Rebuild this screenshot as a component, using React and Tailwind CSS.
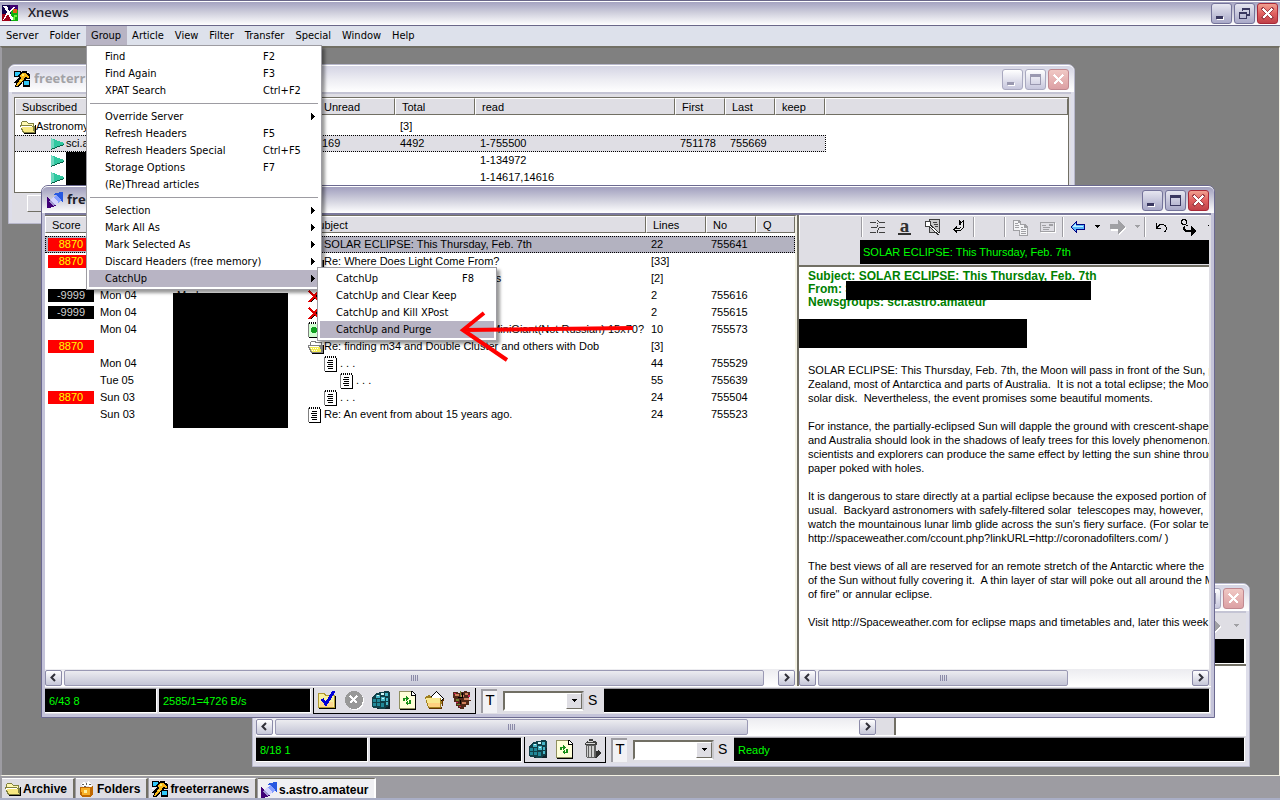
import React from 'react';
import clsx from 'clsx';

/* ---------- icons ---------- */

function Icon({ w = 16, h = 16, className, children }) {
  return (
    <svg width={w} height={h} viewBox={`0 0 ${w} ${h}`} shapeRendering="crispEdges" aria-hidden="true" className={clsx('shrink-0', className)}>
      {children}
    </svg>
  );
}

const LogoIcon = () => (
  <Icon>
    <rect width="16" height="16" fill="#10004a" />
    <rect x="8" width="8" height="8" fill="#400070" />
    <rect x="0" y="9" width="8" height="7" fill="#a00018" />
    <rect x="9" y="5" width="7" height="11" fill="#10b010" />
    <rect x="11" y="4" width="4" height="4" fill="#e06010" />
    <path d="M1 1h4l2 5 4-4h2l-5 6 4 7h-3l-3-6-4 6H1l4-8z" fill="#fff" />
    <path d="M12 10h3v2h-2v3h-2z" fill="#70f040" />
  </Icon>
);

const ServerIcon = () => (
  <Icon>
    <path d="M0 0h7v6H0zM9 9h7v7H9z" fill="#000" />
    <path d="M1 1h5v4H1zM10 10h5v4h-5z" fill="#30c8f8" />
    <path d="M8 0h4l4 3v5l-4 0v2H9l-1 2-3 4H1l1-4-2 0 5-6-2-2 3-1z" fill="#000" />
    <path d="M8 2h3l4 3v2l-4-1-1 3-3 2-3 4H2l3-5 2-3-1-2z" fill="#f8b818" />
    <path d="M8 3h2v2H8zM6 9h2v1H6z" fill="#f8f070" />
    <path d="M10 10h5v3h-5zM1 2h3v2H1z" fill="#30c8f8" />
    <path d="M0 7h2v1H0zM13 1h2v1h-2z" fill="#fff" />
  </Icon>
);

const LinkIcon = () => (
  <Icon>
    <path d="M5 2h3V1h4V0h4v10h-1V9h-1V8L8 3z" fill="#2858e0" />
    <path d="M9 3l5 5-3 3-5-5z" fill="#88a0ff" />
    <path d="M6 5l5 5-3 3-5-5z" fill="#d4d4ff" />
    <path d="M0 5h1v1h1v1h1v1l5 5h1v1H7v1H4v1H0z" fill="#400078" />
    <path d="M3 8l5 5-2 1-4-5z" fill="#a098d0" />
  </Icon>
);

const FolderIcon = () => (
  <Icon>
    <path d="M1 3h1V2h5v1h1v1h6v3h1v7H3v-1H2V8H1z" fill="#808040" />
    <path d="M2 3h5v1h1v1h5v2H3v1H2z" fill="#fff8b0" />
    <path d="M1 7h11v1h1v4h1v1H4v-1H3v-2H2V8H1z" fill="#f8e880" />
    <path d="M0 6h12v1H1v1H0zM1 8h1v3H1zM2 11h1v2H2z" fill="#808040" />
    <path d="M1 7h11v1H2v1H1z" fill="#fff" />
    <path d="M15 6h1v9H4v-1h11z" fill="#000" />
  </Icon>
);

const ThreadFolderIcon = () => (
  <Icon>
    <path d="M3 2h5v1h6v3h1v8H3v-1H2v-2H1V9H0V6h2V3h1z" fill="#808080" />
    <path d="M3 3h4v1h6v2H3z" fill="#fff" />
    <path d="M1 7h10v1h1v2h1v3H4v-1H3v-2H2V8H1z" fill="#f4ec50" />
    <path d="M1 7h10v1H1zM3 9h1v1H3zM5 9h1v1H5zM7 9h1v1H7zM9 9h1v1H9zM4 11h1v1H4zM6 11h1v1H6zM8 11h1v1H8z" fill="#fff" />
    <path d="M15 6h1v9H4v-1h11z" fill="#000" />
  </Icon>
);

const NoteIcon = ({ green }) => (
  <Icon>
    <rect x="1" y="2" width="12" height="14" fill="#000" />
    <rect x="0" y="1" width="12" height="14" fill="#808080" />
    <rect x="1" y="2" width="11" height="13" fill={green ? '#d0ffd0' : '#fff'} />
    <path d="M1 0h1v2H1zM3 0h1v2H3zM5 0h1v2H5zM7 0h1v2H7zM9 0h1v2H9zM11 0h1v2h-1z" fill="#000" />
    <path d="M2 1h1v1H2zM4 1h1v1H4zM6 1h1v1H6zM8 1h1v1H8zM10 1h1v1h-1z" fill="#fff" />
    {green ? (
      <path d="M4 5h4v1h1v4H8v1H4v-1H3V6h1z" fill="#10a020" />
    ) : (
      <path d="M4 4h5v1H4zM3 6h6v1H3zM4 8h5v1H4zM3 10h6v1H3zM4 12h5v1H4z" fill="#000" />
    )}
  </Icon>
);

const CrossIcon = () => (
  <Icon>
    <path d="M3 4l10 10M13 3L3 14" stroke="#000" strokeWidth="1" />
    <path d="M1 3l11 11M11 3L1 14" stroke="#e00000" strokeWidth="2" />
  </Icon>
);

const GroupIcon = () => (
  <Icon>
    <path d="M1 2l13 5v2L1 14z" fill="#30c8a0" />
    <path d="M1 2l3 2v8l-3 2z" fill="#70d8c0" />
    <path d="M1 13l13-5v1L1 14z" fill="#086048" />
  </Icon>
);

const CheckFolderIcon = () => (
  <Icon w={20} h={20}>
    <path d="M2 4h6l1 2h10v13H2z" fill="#000" />
    <path d="M1 3h7l1 2h9v13H1z" fill="#b09830" />
    <path d="M2 4h5l1 2h9v11H2z" fill="#f8f0a0" />
    <path d="M3 12h13v5H3z" fill="#ffd890" />
    <path d="M5 9l4 5 8-13" stroke="#0000d8" strokeWidth="3" fill="none" />
  </Icon>
);

const StopIcon = () => (
  <Icon w={20} h={20}>
    <circle cx="11" cy="11" r="9" fill="#fff" />
    <circle cx="10" cy="10" r="9" fill="#989898" />
    <path d="M6 6l7 7M13 6l-7 7" stroke="#fff" strokeWidth="2" />
  </Icon>
);

const CubeIcon = () => (
  <Icon w={20} h={20}>
    <path d="M4 16h15v3H6zM17 2h2v15h-2z" fill="#102028" />
    <path d="M1 8l3-4 5-2 8-1 2 2-1 13-5 3-11-1-1-3z" fill="#104048" />
    <path d="M2 9h3v3H2zM6 9h3v3H6zM2 13h3v3H2zM6 13h3v3H6zM10 13h3v4h-3z" fill="#208898" />
    <path d="M5 5h4v3H5zM10 7h4v4h-4zM14 3h3v3h-3zM15 8h2v3h-2zM15 12h2v3h-2z" fill="#48b8c8" />
    <path d="M6 5h2v1H6zM10 3h3v2h-3zM11 8h2v1h-2z" fill="#d0f8f8" />
  </Icon>
);

const RefreshDocIcon = () => (
  <Icon w={20} h={20}>
    <path d="M2 1h12l4 4v15H2z" fill="#000" />
    <path d="M1 1h12v5h4v13H1z" fill="#909060" />
    <path d="M2 2h11v4h4v12H2z" fill="#ffffd8" />
    <path d="M14 2l3 3h-3z" fill="#fff" />
    <path d="M5 11V8h3V6l3 3-3 2V9H7v2zM13 10v4h-3v2l-3-3 3-2v2h1v-3z" fill="#189018" />
  </Icon>
);

const OpenBoxIcon = () => (
  <Icon w={20} h={20}>
    <path d="M2 17h15v2H5zM16 9h3l-2 10z" fill="#603000" />
    <path d="M5 8l6-7 8 8-4 3H6z" fill="#000" />
    <path d="M6 8l5-6 7 7-3 2H7z" fill="#fff" />
    <path d="M0 7l4-2 3 3h9v3h1l-1 7H3z" fill="#a08020" />
    <path d="M1 8h13l1 1-1 8H4z" fill="#f8e890" />
    <path d="M3 13h12v4H4z" fill="#ffd080" />
  </Icon>
);

const BrainIcon = () => (
  <Icon w={20} h={20}>
    <path d="M1 2h5v1h3V2h3V1h3v1h3v4h-1v4h2v1h-2v4h-3v2h-2v2H8v-1H6v-2H4v-4H2V8H1z" fill="#502818" />
    <path d="M3 4h4v2H3zM9 5h3v2H9zM13 3h3v2h-3zM12 8h5v2h-5zM10 12h4v2h-4z" fill="#d0805c" />
    <path d="M4 9h3v2H4zM8 1h1v7H8zM5 14h3v1H5z" fill="#708030" />
    <path d="M2 3h2v1H2zM16 5h2v2h-2zM4 12h2v1H4zM7 16h2v1H7z" fill="#d02050" />
    <path d="M10 3h1v5h-1zM6 7h5v1H6zM8 10h1v4H8z" fill="#000" />
  </Icon>
);

const TrashIcon = () => (
  <Icon w={20} h={20}>
    <path d="M12 12h4v-1l3 3-3 3-2 2H9z" fill="#303030" />
    <path d="M7 0h4v2h2l2 2v2H3V4l2-2h2z" fill="#404040" />
    <path d="M4 4h9v1H4zM6 2h5v1H6z" fill="#d8d8d8" />
    <path d="M4 6h10v12l-2 1H6l-2-1z" fill="#606060" />
    <path d="M5 7h1v11H5zM7 7h2v11H7zM10 7h2v11h-2z" fill="#d0d0d0" />
  </Icon>
);

const MailboxIcon = () => (
  <Icon>
    <path d="M1 6h10l3-1v8l-3 3H3l-2-2z" fill="#c06800" />
    <path d="M2 7h9v7H3z" fill="#f8b028" />
    <path d="M2 4l2-3 3 1 2-2 3 2 1 3-2 1-3-1-4 1z" fill="#fff" />
    <path d="M3 3h2v1H3zM7 2h1v2H7zM10 3h2v1h-2zM5 5h2v1H5z" fill="#606060" />
    <path d="M5 9h3v3H5z" fill="#fff0a0" />
  </Icon>
);

const SplitIcon = () => (
  <Icon>
    <path d="M0 3h6v1H0zM9 3h6v1H9zM1 8h6v1H1zM9 8h6v1H9zM0 13h6v1H0zM9 13h6v1H9zM7 1h1v1H7zM8 2h1v1H8zM7 4h1v1H7zM7 6h1v2H7zM8 9h1v2H8zM7 11h1v3H7z" fill="#404040" />
  </Icon>
);

const FindIcon = () => (
  <Icon>
    <path d="M5 0h11v14H5z" fill="#404040" />
    <path d="M6 1h9v12H6z" fill="#c8c8c8" />
    <path d="M9 3h4v1H9zM10 5h4v1h-4zM11 7h3v1h-3zM8 10h2v1H8z" fill="#404040" />
    <circle cx="4" cy="5" r="3" fill="#fff" stroke="#404040" />
    <path d="M6 7l9 8" stroke="#303030" strokeWidth="3" />
    <path d="M6 7l9 8" stroke="#fff" />
  </Icon>
);

const WrapIcon = () => (
  <Icon>
    <path d="M8 1l2 2 3-2v8l-4 3H6v3l-4-5 4-4v3h2l2-2V6H8z" fill="#000" />
    <path d="M10 4l2-1v5l-3 3H4v-1h4l2-2z" fill="#e8e8e8" />
  </Icon>
);

const CopyIcon = () => (
  <Icon w={17} h={17}>
    <path d="M1 1h6l2 2v9H1zM7 5h6l3 3v9H7z" fill="#a0a0a4" />
    <path d="M2 2h4v2h2v7H2zM8 6h4v3h3v7H8z" fill="#f4f4f6" />
    <path d="M3 4h3v1H3zM3 6h4v1H3zM3 8h4v1H3zM9 8h2v1H9zM9 10h5v1H9zM9 12h5v1H9zM9 14h5v1H9z" fill="#a0a0a4" />
  </Icon>
);

const CardIcon = () => (
  <Icon>
    <path d="M1 4h15v10H1z" fill="#fff" />
    <path d="M0 3h15v10H0z" fill="#a0a0a4" />
    <path d="M1 4h13v8H1z" fill="#dfdee4" />
    <path d="M9 5h4v2H9zM2 6h4v1H2zM3 8h7v1H3zM3 10h6v1H3z" fill="#a0a0a4" />
  </Icon>
);

const BackIcon = () => (
  <Icon>
    <path d="M7 1v4h8v6H7v4L0 8z" fill="#000080" />
    <path d="M6 3v3h8v4H6v3L1 8z" fill="#58b8f8" />
    <path d="M6 4v3h7v1H2z" fill="#c0f0ff" />
  </Icon>
);

const ForwardIcon = () => (
  <Icon>
    <path d="M9 2v4H1v6h8v4l7-7z" fill="#fff" />
    <path d="M8 1v4H0v5h8v5l7-7z" fill="#a0a0a4" />
  </Icon>
);

const UndoIcon = () => (
  <Icon>
    <path d="M3 4h1v3h1V6h1V5h5v1h2v2h1v3h-1v2h-2v-1h1v-1h1V8h-1V7h-1V6H7v1H6v1H5v1h3v1H3z" fill="#000" />
  </Icon>
);

const NextUnreadIcon = () => (
  <Icon w={18} h={18}>
    <path d="M3 1h4v1h1v4H7v1H3V6H2V2h1zM7 7h2v1H7z" fill="#000" />
    <path d="M4 2h2v1h1v3H4V5H3V3h1z" fill="#dfdee4" />
    <path d="M5 8h1v3h1v1h5V8l6 5-6 5v-4H6v-1H5v-1H4V9h1z" fill="#000" />
  </Icon>
);

const Caret = ({ color = '#000' }) => (
  <Icon w={7} h={4}>
    <path d="M1 0h5v1H5v1H4v1H3V2H2V1H1z" fill={color} />
  </Icon>
);

/* ---------- window chrome ---------- */

function CaptionButton({ kind, active }) {
  const ink = active ? '#3a3860' : '#9a99b0';
  return (
    <button
      aria-label={kind}
      className={clsx(
        'flex h-[21px] w-[21px] items-center justify-center rounded-[3px] border',
        kind === 'Close' && active && 'border-[#a82838] bg-linear-to-b from-[#f0a090] via-[#e06060] to-[#c04048]',
        kind === 'Close' && !active && 'border-[#c08890] bg-linear-to-b from-[#f0c8c4] to-[#dca0a4]',
        kind !== 'Close' && active && 'border-[#74739a] bg-linear-to-b from-[#e6e6f0] to-[#a9a9c8]',
        kind !== 'Close' && !active && 'border-[#a9a9c0] bg-linear-to-b from-white to-[#c6c6dc]'
      )}
    >
      <Icon w={17} h={17}>
        {kind === 'Minimize' && (
          <>
            <rect x="4" y="12" width="7" height="3" fill="#fff" />
            <rect x="3" y="11" width="7" height="3" fill={ink} />
          </>
        )}
        {kind === 'Maximize' && <path d="M3 3h11v11H3zM4 6h9v7H4z" fillRule="evenodd" fill={ink} />}
        {kind === 'Restore' && <path d="M6 3h8v8h-3V9h2V5H7v1H6zM3 7h8v7H3zM4 9h6v4H4z" fillRule="evenodd" fill={ink} />}
        {kind === 'Close' && (
          <>
            {active && <path d="M3 3l11 11M14 3L3 14" stroke="#a04048" strokeWidth="4" />}
            <path d="M4 4l9 9M13 4l-9 9" stroke="#fff" strokeWidth="2" />
          </>
        )}
      </Icon>
    </button>
  );
}

function MdiWindow({ title, icon, active = false, className, children }) {
  return (
    <section
      className={clsx(
        'absolute flex flex-col rounded-t-[7px] border',
        active ? 'border-[#6b6990] bg-[#c4c3d9]' : 'border-[#b8b8cc] bg-[#dedeea]',
        className
      )}
    >
      <header
        className={clsx(
          'flex h-[27px] shrink-0 items-center gap-1 rounded-t-[6px] border-t border-white bg-linear-to-b pr-[5px] pl-[5px] font-[Open_Sans,sans-serif] text-[13px] font-bold',
          active ? 'from-[#a19fbe] via-[#d0d0dd] to-white text-[#1e1e2a]' : 'from-[#d4d4e4] via-[#ececf2] to-white text-[#a2a2a6]'
        )}
      >
        {icon}
        <h2 className="flex-1 truncate">{title}</h2>
        <div className="flex gap-0.5">
          <CaptionButton kind="Minimize" active={active} />
          <CaptionButton kind="Maximize" active={active} />
          <CaptionButton kind="Close" active={active} />
        </div>
      </header>
      <div className={clsx('mx-[3px] mb-[3px] flex min-h-0 flex-1 flex-col border-t-2 bg-[#dfdee4]', active ? 'border-[#7b799c]' : 'border-[#c4c4d4]')}>
        {children}
      </div>
    </section>
  );
}

/* ---------- list views ---------- */

function ColumnHeads({ heads }) {
  return (
    <thead>
      <tr>
        {heads.map((head, i) => (
          <th key={i} scope="col" className="p-0 pb-[3px] text-left font-normal">
            <div className="h-[17px] overflow-hidden border-t border-r border-b border-l border-t-white border-r-[#716f64] border-b-[#716f64] border-l-white bg-[#dfdee4] pl-[6px] leading-[16px]">
              {head}
            </div>
          </th>
        ))}
      </tr>
    </thead>
  );
}

const groups = [
  { name: 'Astronomy', folder: true, total: '[3]' },
  { name: 'sci.astro.amateur', unread: '169', total: '4492', read: '1-755500', first: '751178', last: '755669', selected: true },
  { name: '', read: '1-134972' },
  { name: '', read: '1-14617,14616' },
];

function GroupList() {
  return (
    <table className="w-full table-fixed border-collapse">
      <colgroup>
        <col className="w-[302px]" />
        <col className="w-[78px]" />
        <col className="w-[80px]" />
        <col className="w-[200px]" />
        <col className="w-[50px]" />
        <col className="w-[50px]" />
        <col className="w-[50px]" />
        <col />
      </colgroup>
      <ColumnHeads heads={['Subscribed', 'Unread', 'Total', 'read', 'First', 'Last', 'keep', '']} />
      <tbody>
        {groups.map((g, i) => {
          const cell = clsx('h-[17px] p-0 pl-[5px] leading-[17px]', g.selected && 'bg-[linear-gradient(90deg,#000_1px,transparent_1px),linear-gradient(90deg,#000_1px,transparent_1px),linear-gradient(#dfdee4,#dfdee4)] bg-[length:2px_1px,2px_1px,100%_100%] bg-[position:0_0,0_100%,0_0] [background-repeat:repeat-x,repeat-x,no-repeat]');
          return (
            <tr key={i}>
              <td className={cell}>
                <div className={clsx('flex h-[17px] items-center', !g.folder && 'pl-[30px]')}>
                  {g.folder ? <FolderIcon /> : <GroupIcon />}
                  <span>{g.name}</span>
                  {!g.name && <span className="h-[17px] w-[60px] bg-black" />}
                </div>
              </td>
              <td className={cell}>{g.unread}</td>
              <td className={cell}>{g.total}</td>
              <td className={cell}>{g.read}</td>
              <td className={cell}>{g.first}</td>
              <td className={cell}>{g.last}</td>
              <td className={cell}></td>
              <td className={clsx('p-0', g.selected && 'border-l border-dotted border-black')}></td>
            </tr>
          );
        })}
      </tbody>
    </table>
  );
}

const articles = [
  { score: 8870, icon: 'note', subject: 'SOLAR ECLIPSE: This Thursday, Feb. 7th', lines: '22', no: '755641', selected: true },
  { score: 8870, icon: 'folder', subject: 'Re: Where Does Light Come From?', lines: '[33]' },
  { icon: 'folder', subject: 'Re: Old telescopes and the manuals', lines: '[2]' },
  { score: -9999, date: 'Mon 04', author: 'Mark', icon: 'cross', lines: '2', no: '755616' },
  { score: -9999, date: 'Mon 04', icon: 'cross', lines: '2', no: '755615' },
  { date: 'Mon 04', icon: 'green', subject: "Re: Has anyone used Oberwerk's MiniGiant(Not Russian) 15x70?", lines: '10', no: '755573' },
  { score: 8870, icon: 'folder', subject: 'Re: finding m34 and Double Cluster and others with Dob', lines: '[3]' },
  { date: 'Mon 04', icon: 'note', depth: 1, subject: '. . .', lines: '44', no: '755529' },
  { date: 'Tue 05', icon: 'note', depth: 2, subject: '. . .', lines: '55', no: '755639' },
  { score: 8870, date: 'Sun 03', icon: 'note', depth: 1, subject: '. . .', lines: '24', no: '755504' },
  { date: 'Sun 03', icon: 'note', subject: 'Re: An event from about 15 years ago.', lines: '24', no: '755523' },
];

const subjectIcons = {
  note: <NoteIcon />,
  green: <NoteIcon green />,
  cross: <CrossIcon />,
  folder: <ThreadFolderIcon />,
};

const indents = ['', 'pl-4', 'pl-8'];

function ArticleList() {
  return (
    <table className="w-full table-fixed border-collapse">
      <colgroup>
        <col className="w-[51px]" />
        <col className="w-[77px]" />
        <col className="w-[131px]" />
        <col className="w-[342px]" />
        <col className="w-[60px]" />
        <col className="w-[50px]" />
        <col />
      </colgroup>
      <ColumnHeads heads={['Score', 'Date', 'From', 'Subject', 'Lines', 'No', 'Q']} />
      <tbody>
        {articles.map((a, i) => (
          <tr key={i} className={clsx(a.selected && 'bg-[#b3b2c0] outline-1 -outline-offset-1 outline-dotted outline-black')}>
            <td className="h-[17px] p-0 pl-[3px]">
              {a.score && (
                <div className={clsx('h-[13px] w-[46px] text-center leading-[13px]', a.score > 0 ? 'bg-[#ff0000] text-[#ffff00]' : 'bg-black text-[#d0d0d0]')}>
                  {a.score}
                </div>
              )}
            </td>
            <td className="p-0 pl-1 leading-[17px]">{a.date}</td>
            <td className="p-0 pl-1 leading-[17px]">{a.author}</td>
            <td className="p-0 pl-1 leading-[17px]">
              <div className={clsx('flex h-[17px] items-center overflow-hidden whitespace-nowrap', indents[a.depth || 0])}>
                {subjectIcons[a.icon]}
                <span>{a.subject}</span>
              </div>
            </td>
            <td className="p-0 pl-[5px] leading-[17px]">{a.lines}</td>
            <td className="p-0 pl-[5px] leading-[17px]">{a.no}</td>
            <td className="p-0"></td>
          </tr>
        ))}
      </tbody>
    </table>
  );
}

/* ---------- shared bars ---------- */

function ScrollButton({ dir }) {
  return (
    <button aria-label={`Scroll ${dir}`} className="flex h-[16px] w-[17px] items-center justify-center rounded-[2px] border border-[#8b8aa8] bg-linear-to-b from-white to-[#c6c7d8]">
      <svg width="9" height="9" viewBox="0 0 9 9" aria-hidden="true">
        <path d={dir === 'left' ? 'M6 1L2.500 4.500 6 8' : 'M3 1l3.500 3.500L3 8'} fill="none" stroke="#303038" strokeWidth="2" />
      </svg>
    </button>
  );
}

function ScrollBar({ thumb }) {
  return (
    <div className="flex h-[17px] shrink-0 items-center gap-0.5 bg-linear-to-b from-[#ececf0] to-white">
      <ScrollButton dir="left" />
      <div className={clsx('flex h-[16px] items-center justify-center gap-px rounded-[2px] border border-[#9a99b4] bg-linear-to-b from-[#ececf0] to-[#c4c5d6]', thumb)}>
        {[0, 1, 2, 3].map((n) => (
          <span key={n} className="h-[6px] w-px bg-[#8b8aa8]" />
        ))}
      </div>
      <div className="flex-1" />
      <ScrollButton dir="right" />
    </div>
  );
}

function StatusPanel({ className, children }) {
  return (
    <div className={clsx('h-[25px] truncate border-t border-r border-b border-t-[#9d9ca2] border-r-white border-b-white bg-black pl-1 leading-[24px] text-[#00ff00]', className)}>
      {children}
    </div>
  );
}

function StatusBar({ id, left, middle, right, tools }) {
  return (
    <footer className="flex h-[28px] shrink-0 items-center border-t border-white pr-px">
      <StatusPanel className="w-[112px]">{left}</StatusPanel>
      <StatusPanel className="ml-0.5 w-[152px]">{middle}</StatusPanel>
      <div className="ml-[2px] flex h-[26px] items-center gap-[7px] border-r border-b border-l border-black px-[3px]">
        {tools.map(([label, icon]) => (
          <button key={label} aria-label={label}>
            {icon}
          </button>
        ))}
      </div>
      <button className="ml-[5px] flex h-[24px] w-[16px] items-start justify-center border-t-2 border-l-2 border-[#9d9ca2] bg-[#f2f2f5] text-[15px] leading-[18px]">T</button>
      <div className="ml-[6px] flex h-[20px] w-[81px] border-2 border-t-[#716f64] border-r-[#c8c8cc] border-b-white border-l-[#716f64] bg-white">
        <select id={id} className="min-w-0 flex-1 appearance-none bg-white" />
        <span className="flex w-[16px] items-center justify-center border border-t-white border-r-[#716f64] border-b-[#716f64] border-l-white bg-[#dfdee4]">
          <Caret />
        </span>
      </div>
      <label htmlFor={id} className="ml-1 w-[12px] text-[14px]">S</label>
      <StatusPanel className="ml-1 flex-1">{right}</StatusPanel>
    </footer>
  );
}

const Separator = () => <span className="mx-px h-[20px] w-[2px] shrink-0 border-r border-l border-r-white border-l-[#9d9ca2]" />;

function ToolButton({ label, className = 'w-[27px]', children }) {
  return (
    <button aria-label={label} className={clsx('flex h-[22px] shrink-0 items-center justify-center', className)}>
      {children}
    </button>
  );
}

function ArticleToolbar() {
  return (
    <div className="flex h-[25px] shrink-0 items-center overflow-hidden border-t border-l border-white pb-[2px] pl-[60px]">
      <Separator />
      <ToolButton label="Split"><SplitIcon /></ToolButton>
      <ToolButton label="Font">
        <span className="border-b-2 border-[#303030] px-0.5 font-[Liberation_Serif,serif] text-[19px] leading-[14px] font-bold text-[#303030]">a</span>
      </ToolButton>
      <ToolButton label="Search"><FindIcon /></ToolButton>
      <ToolButton label="Wrap"><WrapIcon /></ToolButton>
      <Separator />
      <span className="w-[27px] shrink-0" />
      <Separator />
      <ToolButton label="Copy"><CopyIcon /></ToolButton>
      <ToolButton label="Headers"><CardIcon /></ToolButton>
      <Separator />
      <ToolButton label="Back" className="w-[25px]"><BackIcon /></ToolButton>
      <ToolButton label="Back history" className="w-[14px]"><Caret /></ToolButton>
      <ToolButton label="Forward"><ForwardIcon /></ToolButton>
      <ToolButton label="Forward history" className="w-[12px]"><Caret color="#a0a0a4" /></ToolButton>
      <Separator />
      <ToolButton label="Undo"><UndoIcon /></ToolButton>
      <ToolButton label="Next unread"><NextUnreadIcon /></ToolButton>
      <ToolButton label="More" className="w-[18px]"><Caret /></ToolButton>
    </div>
  );
}

/* ---------- article ---------- */

const body = `SOLAR ECLIPSE: This Thursday, Feb. 7th, the Moon will pass in front of the Sun, producing
Zealand, most of Antarctica and parts of Australia.  It is not a total eclipse; the Moon will
solar disk.  Nevertheless, the event promises some beautiful moments.

For instance, the partially-eclipsed Sun will dapple the ground with crescent-shaped
and Australia should look in the shadows of leafy trees for this lovely phenomenon.
scientists and explorers can produce the same effect by letting the sun shine through
paper poked with holes.

It is dangerous to stare directly at a partial eclipse because the exposed portion of the
usual.  Backyard astronomers with safely-filtered solar  telescopes may, however,
watch the mountainous lunar limb glide across the sun's fiery surface. (For solar telescopes
http://spaceweather.com/ccount.php?linkURL=http://coronadofilters.com/ )

The best views of all are reserved for an remote stretch of the Antarctic where the
of the Sun without fully covering it.  A thin layer of star will poke out all around the Moon
of fire" or annular eclipse.

Visit http://Spaceweather.com for eclipse maps and timetables and, later this week`;

function ArticlePane() {
  return (
    <div className="flex min-w-0 flex-1 flex-col border-l-2 border-[#716f64]">
      <ArticleToolbar />
      <div className="ml-[61px] h-[24px] shrink-0 truncate bg-black pl-[3px] leading-[24px] text-[#00ff00]">SOLAR ECLIPSE: This Thursday, Feb. 7th</div>
      <article className="relative mt-px min-h-0 flex-1 overflow-hidden border-t-2 border-[#716f64] bg-white pt-[3px] pl-[9px]">
        <h3 className="text-[12px] leading-[13px] font-bold whitespace-nowrap text-[#008000]">
          Subject: SOLAR ECLIPSE: This Thursday, Feb. 7th
          <br />
          From: S
          <br />
          Newsgroups: sci.astro.amateur
        </h3>
        <span className="absolute top-[14px] left-[47px] h-[19px] w-[245px] bg-black" />
        <span className="absolute top-[52px] left-0 h-[29px] w-[228px] bg-black" />
        <p className="pt-[54px] leading-[14px] whitespace-pre">{body}</p>
      </article>
      <ScrollBar thumb="w-[250px]" />
    </div>
  );
}

/* ---------- menus ---------- */

const groupMenu = [
  { label: 'Find', key: 'F2' },
  { label: 'Find Again', key: 'F3' },
  { label: 'XPAT Search', key: 'Ctrl+F2' },
  null,
  { label: 'Override Server', sub: true },
  { label: 'Refresh Headers', key: 'F5' },
  { label: 'Refresh Headers Special', key: 'Ctrl+F5' },
  { label: 'Storage Options', key: 'F7' },
  { label: '(Re)Thread articles' },
  null,
  { label: 'Selection', sub: true },
  { label: 'Mark All As', sub: true },
  { label: 'Mark Selected As', sub: true },
  { label: 'Discard Headers (free memory)', sub: true },
  {
    label: 'CatchUp',
    active: true,
    sub: [
      { label: 'CatchUp', key: 'F8' },
      { label: 'CatchUp and Clear Keep' },
      { label: 'CatchUp and Kill XPost' },
      { label: 'CatchUp and Purge', active: true },
    ],
  },
];

function Menu({ items, className, keyWidth }) {
  return (
    <ul role="menu" className={clsx('absolute z-20 border border-[#9d9ca2] bg-white p-[2px] shadow-[3px_3px_3px_rgba(0,0,0,0.4)]', className)}>
      {items.map((item, i) =>
        item ? (
          <li key={i} className="relative">
            <button role="menuitem" className={clsx('flex h-[17px] w-full items-center pl-4 text-left leading-[17px] whitespace-nowrap', item.active && 'bg-[#b8b4c4]')}>
              <span className="flex-1">{item.label}</span>
              {item.key && <span className={keyWidth}>{item.key}</span>}
              {item.sub && (
                <Icon w={5} h={7} className="mr-[3px]">
                  <path d="M0 0h1v1h1v1h1v1h1v1H3v1H2v1H1v1H0z" fill="#000" />
                </Icon>
              )}
            </button>
            {Array.isArray(item.sub) && <Menu items={item.sub} className="-top-[3px] left-[228px] w-[180px]" keyWidth="w-[32px]" />}
          </li>
        ) : (
          <li key={i} role="separator" className="mx-px my-1 h-px bg-[#9d9ca2]" />
        )
      )}
    </ul>
  );
}

const menuNames = ['Server', 'Folder', 'Group', 'Article', 'View', 'Filter', 'Transfer', 'Special', 'Window', 'Help'];

const tasks = [
  { label: 'Archive', icon: <FolderIcon /> },
  { label: 'Folders', icon: <MailboxIcon /> },
  { label: 'freeterranews', icon: <ServerIcon /> },
  { label: 's.astro.amateur', icon: <LinkIcon />, pressed: true },
];

export default function App() {
  return (
    <div className="relative flex h-screen flex-col overflow-hidden bg-[#dfdee4] font-[Liberation_Sans,Arial,sans-serif] text-[11px] text-black">
      <header className="flex h-[26px] shrink-0 items-center border-t border-b border-t-[#6a6789] border-b-[#6a6789] bg-linear-to-b from-[#a19fbe] via-[#d0d0dd] to-white pr-[2px] pl-[2px] shadow-[inset_0_1px_0_#fff]">
        <LogoIcon />
        <h1 className="ml-[10px] flex-1 font-[Open_Sans,sans-serif] text-[13px] font-semibold text-[#1e1e2a]">Xnews</h1>
        <div className="flex gap-0.5">
          <CaptionButton kind="Minimize" active />
          <CaptionButton kind="Restore" active />
          <CaptionButton kind="Close" active />
        </div>
      </header>

      <nav className="flex h-[20px] shrink-0 bg-[#dde1eb] pl-px font-[DejaVu_Sans_Condensed,Tahoma,sans-serif] text-[11px]">
        {menuNames.map((name) => (
          <div key={name} className="relative">
            <button className={clsx('h-[19px] pt-px pr-[6px] pl-[5px]', name === 'Group' && 'bg-[#b8b4c4]')}>{name}</button>
            {name === 'Group' && <Menu items={groupMenu} className="top-[19px] left-0 w-[236px]" keyWidth="w-[56px]" />}
          </div>
        ))}
      </nav>

      <main className="relative min-h-0 flex-1 overflow-hidden border-t-2 border-r border-b border-l-2 border-t-[#716f64] border-r-[#f4f2e4] border-b-[#f4f2e4] border-l-[#9d9ca2] bg-[#808080]">
        <MdiWindow title="freeterranews" icon={<ServerIcon />} className="top-[16px] right-[204px] left-[6px] h-[160px]">
          <div className="mx-[2px] mt-[3px] h-[96px] shrink-0 overflow-hidden border border-[#716f64] bg-white">
            <GroupList />
          </div>
          <button className="mt-[2px] ml-[15px] h-[17px] w-[75px] border border-t-white border-r-[#716f64] border-b-[#716f64] border-l-white">Close</button>
        </MdiWindow>

        <MdiWindow title="alt.astronomy" icon={<LinkIcon />} className="right-[29px] bottom-[8px] left-[250px] h-[184px]">
          <div className="flex min-h-0 flex-1">
            <div className="flex w-[620px] flex-col bg-white">
              <div className="flex-1" />
              <ScrollBar thumb="w-[473px]" />
            </div>
            <div className="ml-[18px] flex min-w-0 flex-1 flex-col border-l-2 border-[#716f64] bg-white">
              <div className="flex h-[26px] shrink-0 items-center justify-end bg-[#dfdee4]">
                <ToolButton label="Forward"><ForwardIcon /></ToolButton>
                <ToolButton label="Forward history" className="w-[20px]"><Caret color="#a0a0a4" /></ToolButton>
              </div>
              <div className="mr-[2px] h-[24px] shrink-0 bg-black" />
              <div className="mt-px h-[2px] bg-[#716f64]" />
            </div>
          </div>
          <StatusBar
            id="scope-back"
            left="8/18 1"
            right="Ready"
            tools={[
              ['Grid', <CubeIcon />],
              ['Refresh', <RefreshDocIcon />],
              ['Trash', <TrashIcon />],
            ]}
          />
        </MdiWindow>

        <MdiWindow active title="freeterranews: sci.astro.amateur" icon={<LinkIcon />} className="top-[137px] right-[64px] bottom-[57px] left-[39px]">
          <div className="flex min-h-0 flex-1 pr-[2px]">
            <div className="relative flex w-[752px] shrink-0 flex-col border-t border-r-2 border-t-[#716f64] border-r-[#f4f2e4] bg-white">
              <div className="min-h-0 flex-1 overflow-hidden">
                <ArticleList />
              </div>
              <span className="absolute top-[77px] left-[128px] h-[135px] w-[115px] bg-black" />
              <ScrollBar thumb="w-[700px]" />
            </div>
            <ArticlePane />
          </div>
          <StatusBar
            id="scope-front"
            left="6/43 8"
            middle="2585/1=4726 B/s"
            tools={[
              ['Mark', <CheckFolderIcon />],
              ['Stop', <StopIcon />],
              ['Grid', <CubeIcon />],
              ['Refresh', <RefreshDocIcon />],
              ['Open', <OpenBoxIcon />],
              ['Decode', <BrainIcon />],
            ]}
          />
        </MdiWindow>
      </main>

      <footer className="flex h-[24px] shrink-0 items-stretch gap-px border-b-2 border-[#a9aec6] bg-[#9d9ca2] pt-[2px] pl-[2px] text-[12px] font-bold">
        {tasks.map((t) => (
          <button
            key={t.label}
            className={clsx(
              'flex items-center gap-[2px] border-t border-r-2 pr-[6px] pl-[3px]',
              t.pressed ? 'border-t-[#716f64] border-r-white bg-[#f0f0f3] pt-[2px]' : 'border-t-white border-r-[#716f64] bg-[#dfdee4]'
            )}
          >
            {t.icon}
            {t.label}
          </button>
        ))}
      </footer>

      {/* hand-drawn pointer to the menu entry */}
      <svg width="180" height="56" viewBox="0 0 180 56" aria-hidden="true" className="pointer-events-none absolute top-[308px] left-[456px] z-30">
        <path d="M177 20L7 22M28 5L7 22l44 30" fill="none" stroke="#ff0000" strokeWidth="4" />
      </svg>
    </div>
  );
}
